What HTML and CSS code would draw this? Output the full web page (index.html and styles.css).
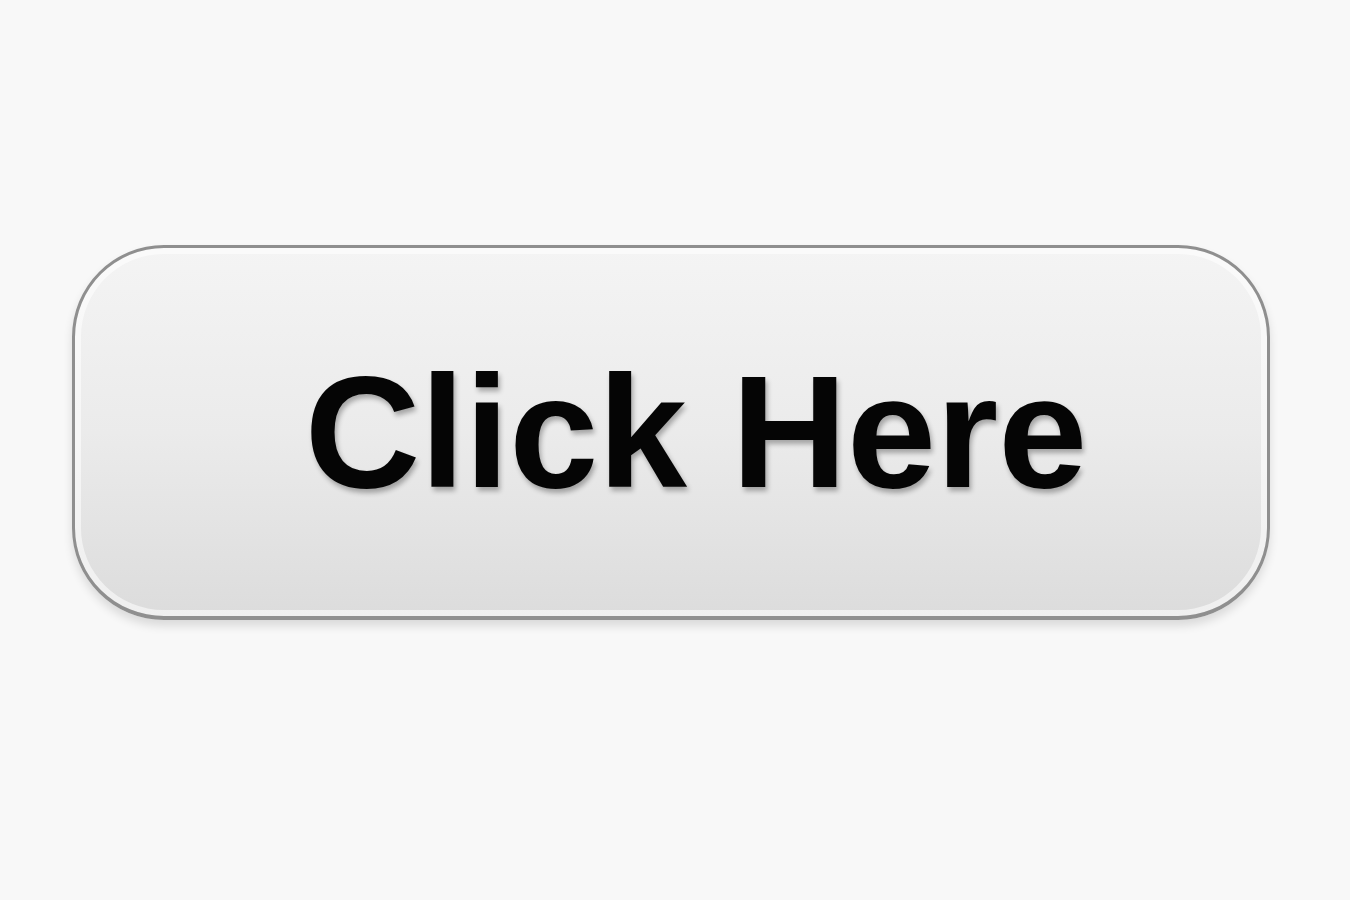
FILE: index.html
```html
<!DOCTYPE html>
<html>
<head>
<meta charset="utf-8">
<link rel="stylesheet" href="styles.css">
</head>
<body>
<div class="stage">
  <button class="cta">Click Here</button>
</div>
</body>
</html>
```
FILE: styles.css
```css
html, body {
  margin: 0;
  padding: 0;
  background: #f8f8f8;
}
.stage {
  width: 1350px;
  height: 900px;
  box-sizing: border-box;
  padding: 245px 0 0 72px;
  display: flex;
  align-items: flex-start;
}
.cta {
  width: 1198px;
  height: 375px;
  box-sizing: border-box;
  border: 3px solid #8f8f8f;
  border-bottom-width: 4px;
  border-radius: 92px;
  background: linear-gradient(180deg, #f4f4f4 0%, #ebebeb 50%, #dcdcdc 100%);
  box-shadow: inset 0 0 0 6px rgba(255,255,255,0.55), 0 6px 10px rgba(0,0,0,0.12);
  display: flex;
  align-items: center;
  justify-content: center;
  padding: 0 0 0 50px;
  font-family: "Liberation Sans", Arial, sans-serif;
  font-weight: 700;
  font-size: 160px;
  color: #050505;
  letter-spacing: 0;
  text-shadow: 2px 4px 5px rgba(0,0,0,0.3);
  cursor: pointer;
}
```
